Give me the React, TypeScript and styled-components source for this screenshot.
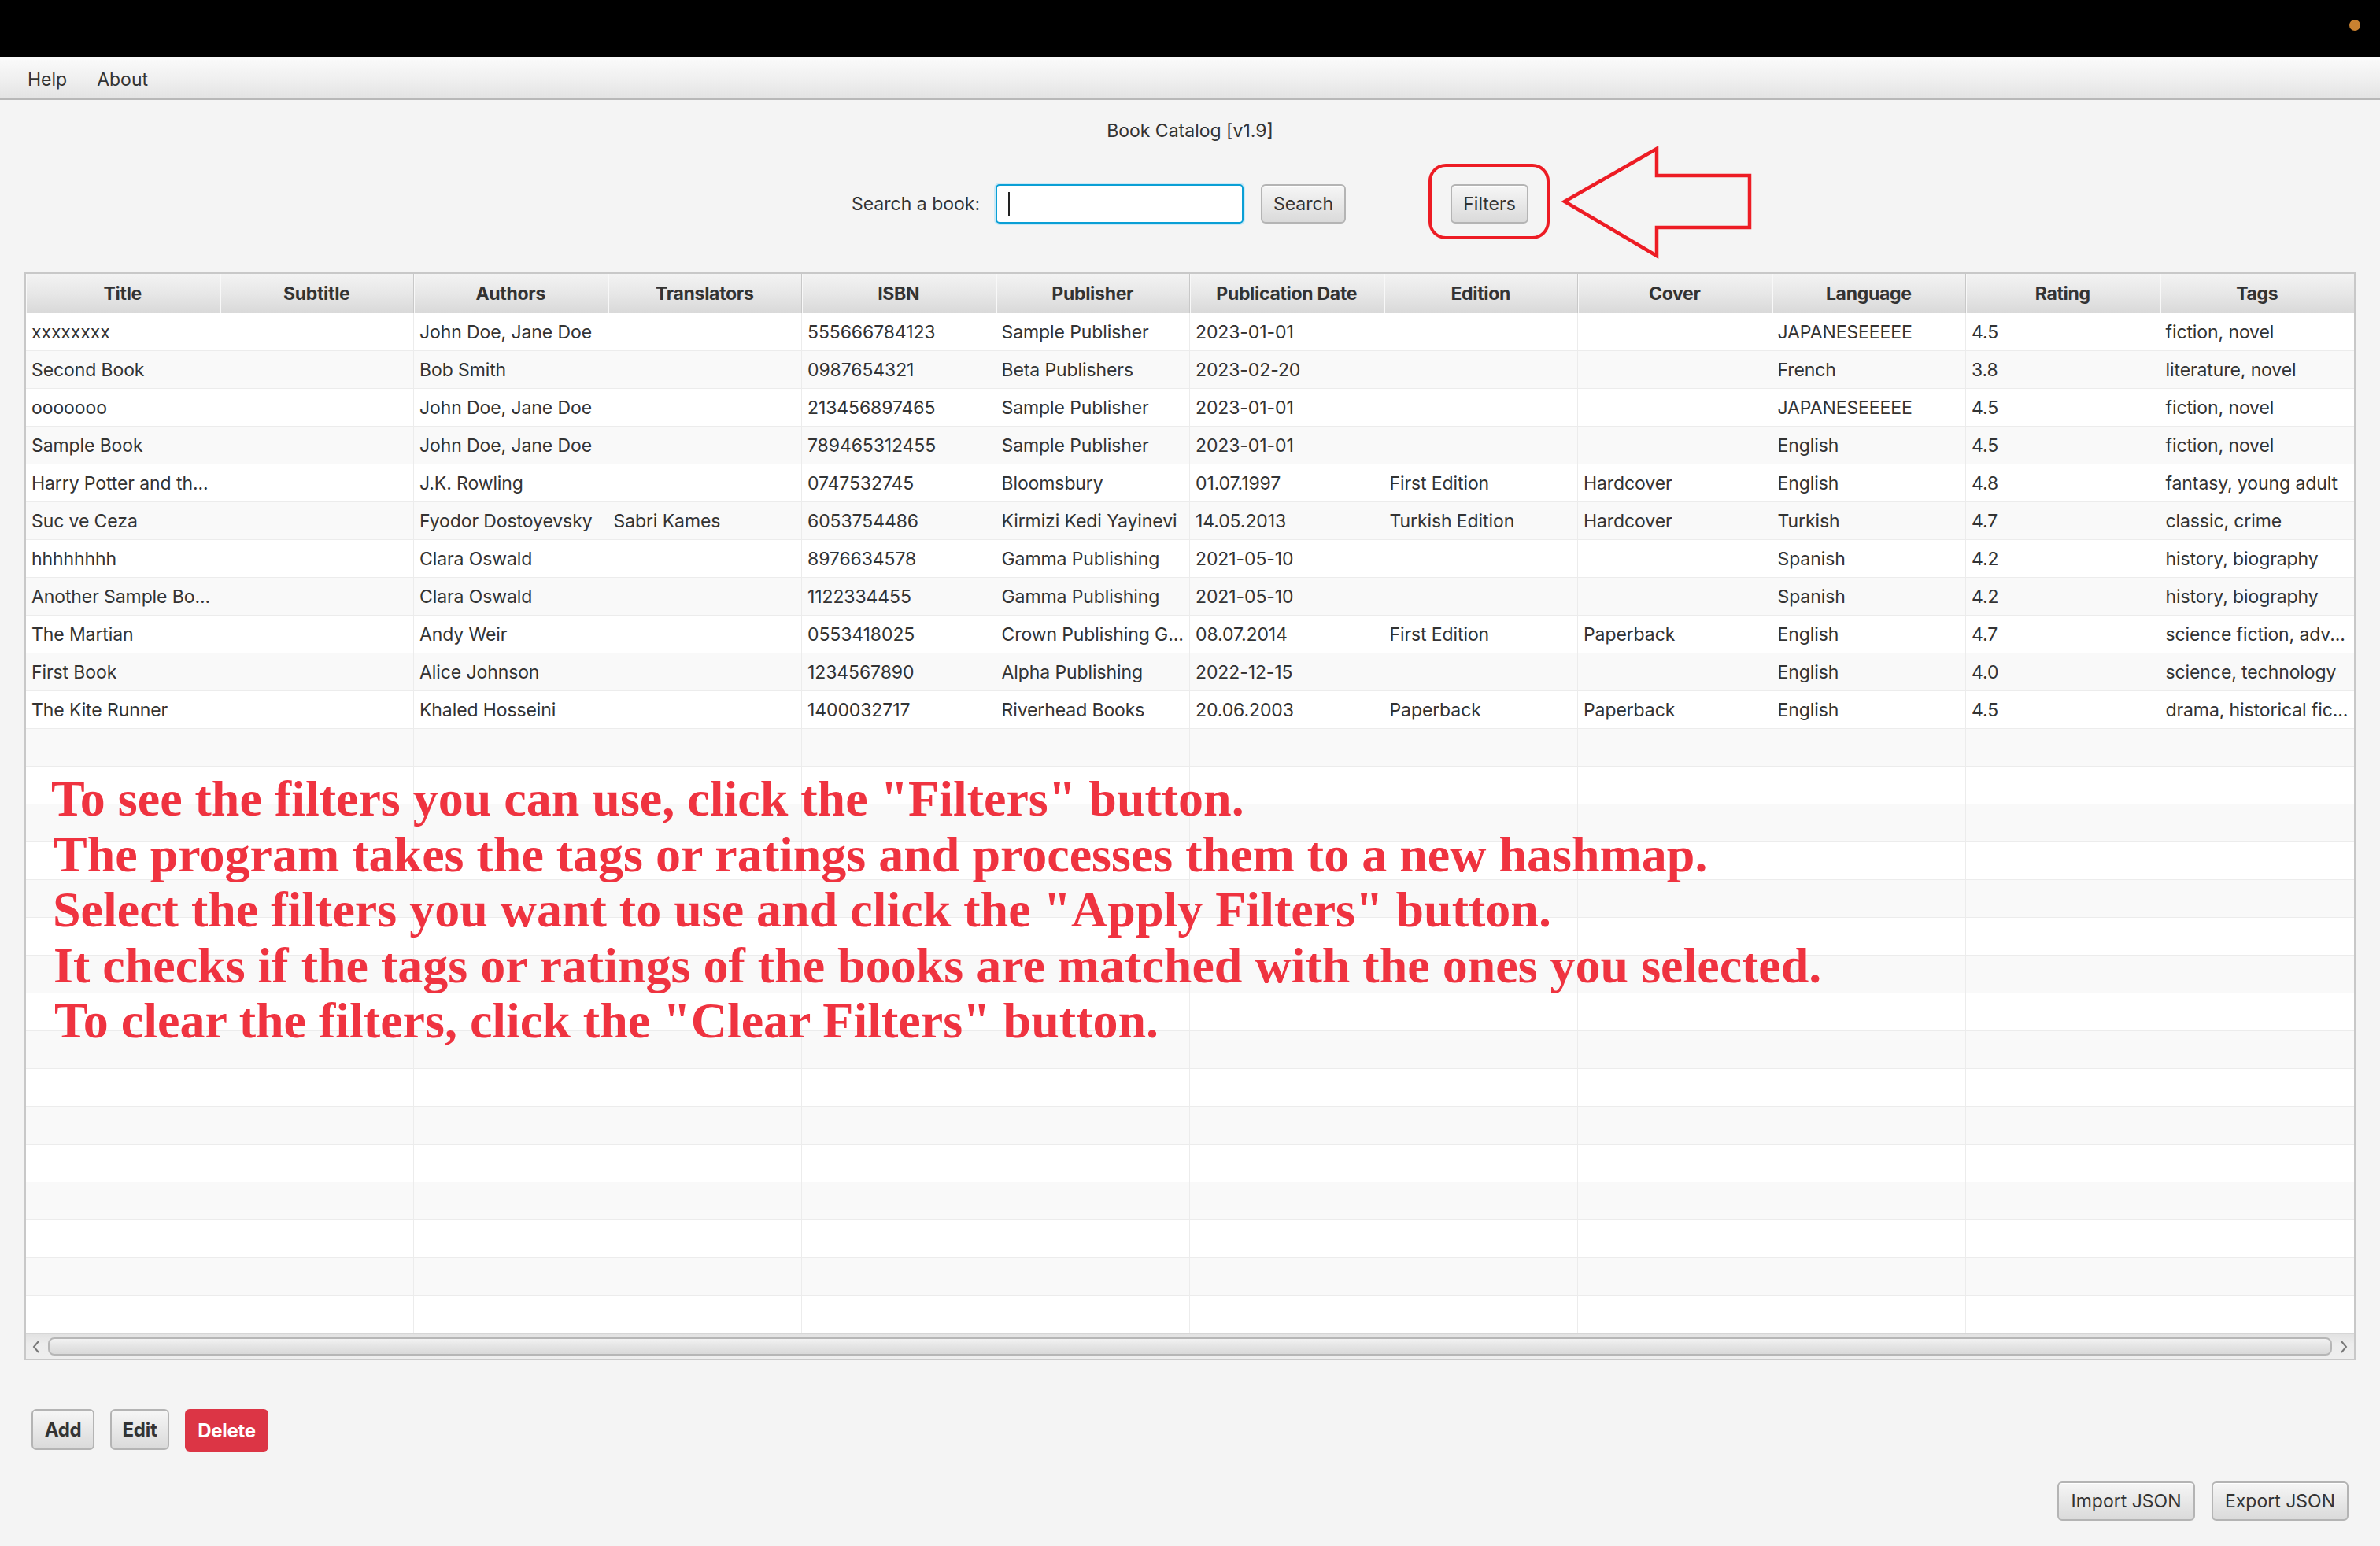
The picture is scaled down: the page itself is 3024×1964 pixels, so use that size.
import React from "react";
import styled, { createGlobalStyle, css } from "styled-components";

const GlobalStyle = createGlobalStyle`
  html, body {
    margin: 0;
    padding: 0;
    background: #f4f4f4;
  }
  body {
    font-family: Inter, "Noto Sans", "Liberation Sans", sans-serif;
    color: #333333;
  }
  * { box-sizing: border-box; }
`;

const Screen = styled.div`
  width: 3024px;
  height: 1964px;
  display: flex;
  flex-direction: column;
  background: #f4f4f4;
  overflow: hidden;
`;

const TopBar = styled.div`
  height: 73px;
  flex: none;
  background: #000000;
  display: flex;
  justify-content: flex-end;
  align-items: flex-start;
  padding: 25px 25px 0 0;
`;

const StatusDot = styled.span`
  width: 14px;
  height: 14px;
  border-radius: 50%;
  background: #c98130;
`;

const MenuBar = styled.div`
  height: 54px;
  flex: none;
  display: flex;
  align-items: center;
  gap: 38px;
  padding: 3px 0 0 35px;
  background: linear-gradient(to bottom, #fbfbfb 0%, #eeeeee 60%, #e3e3e3 100%);
  border-bottom: 2px solid #b8b8b8;
`;

const MenuItem = styled.span`
  font-size: 23px;
  color: #333333;
`;

const Main = styled.div`
  flex: 1;
  display: flex;
  flex-direction: column;
  padding: 0 31px;
`;

const AppTitle = styled.div`
  margin-top: 24px;
  height: 30px;
  line-height: 30px;
  text-align: center;
  font-size: 23px;
  color: #333333;
`;

const SearchRow = styled.div`
  margin-top: 53px;
  height: 50px;
  display: flex;
  justify-content: center;
  align-items: center;
`;

const SearchLabel = styled.span`
  font-size: 23px;
  color: #333333;
  margin-right: 20px;
`;

const SearchField = styled.div`
  width: 315px;
  height: 50px;
  background: #ffffff;
  border: 2px solid #0a9fd5;
  border-radius: 5px;
  box-shadow: 0 0 0 2px #cbe9f6;
  display: flex;
  align-items: center;
  padding-left: 14px;
`;

const Caret = styled.span`
  width: 2px;
  height: 30px;
  background: #222222;
`;

const Button = styled.button<{ $variant?: "default" | "danger"; $w: number; $h?: number; $bold?: boolean }>`
  width: ${(p) => p.$w}px;
  height: ${(p) => p.$h ?? 50}px;
  padding: 0;
  font-family: Inter, "Noto Sans", "Liberation Sans", sans-serif;
  font-size: ${(p) => (p.$bold ? 24 : 23)}px;
  font-weight: ${(p) => (p.$bold ? 700 : 400)};
  letter-spacing: ${(p) => (p.$bold ? "-0.3px" : "0")};
  border-radius: 6px;
  cursor: pointer;
  display: inline-flex;
  align-items: center;
  justify-content: center;
  ${(p) =>
    p.$variant === "danger"
      ? css`
          background: #dc3545;
          color: #ffffff;
          border: none;
        `
      : css`
          background: linear-gradient(to bottom, #f6f6f6 0%, #e8e8e8 50%, #dadada 100%);
          color: #333333;
          border: 2px solid #b4b4b4;
          box-shadow: inset 0 1px 0 #ffffff;
        `}
`;

const SearchButton = styled(Button)`
  margin-left: 22px;
`;

const FilterSpot = styled.div`
  position: relative;
  margin-left: 133px;
  display: flex;
`;

const HighlightRing = styled.span`
  position: absolute;
  left: -28px;
  right: -27px;
  top: -26px;
  bottom: -20px;
  border: 4px solid #ed1c24;
  border-radius: 22px;
  pointer-events: none;
`;

const ArrowMark = styled.svg`
  position: absolute;
  left: 142px;
  top: -48px;
  width: 242px;
  height: 142px;
  overflow: visible;
  pointer-events: none;
`;

const TableFrame = styled.div`
  margin-top: 62px;
  position: relative;
  display: flex;
  flex-direction: column;
  border: 2px solid #c8c8c8;
  background: #ffffff;
`;

const HeaderRow = styled.div`
  display: grid;
  grid-template-columns: repeat(12, 1fr);
  border-bottom: 1px solid #c4c4c4;
`;

const HeaderCell = styled.div`
  height: 49px;
  display: flex;
  align-items: center;
  justify-content: center;
  font-size: 23px;
  font-weight: 700;
  color: #333333;
  letter-spacing: -0.3px;
  background: linear-gradient(to bottom, #f3f3f3 0%, #e6e6e6 55%, #d9d9d9 100%);
  border-right: 1px solid #c8c8c8;
  box-shadow: inset 1px 0 0 #f8f8f8;
  &:last-child { border-right: none; }
`;

const BodyRow = styled.div<{ $alt: boolean }>`
  display: grid;
  grid-template-columns: repeat(12, 1fr);
  height: 48px;
  background: ${(p) => (p.$alt ? "#f9f9f9" : "#ffffff")};
  border-bottom: 1px solid #ececec;
`;

const Cell = styled.div`
  display: flex;
  align-items: center;
  padding: 0 7px;
  font-size: 23px;
  color: #333333;
  letter-spacing: -0.1px;
  white-space: nowrap;
  overflow: hidden;
  border-right: 1px solid #ececec;
  &:last-child { border-right: none; }
`;

const HScrollBar = styled.div`
  height: 32px;
  display: flex;
  align-items: center;
  gap: 8px;
  padding: 0 6px;
  background: linear-gradient(to bottom, #e2e2e2 0%, #ececec 40%, #eeeeee 100%);
  border-top: 1px solid #d6d6d6;
`;

const ScrollArrow = styled.svg`
  width: 14px;
  height: 22px;
  flex: none;
`;

const ScrollThumb = styled.div`
  flex: 1;
  height: 23px;
  border-radius: 8px;
  border: 2px solid #b6b6b6;
  background: linear-gradient(to bottom, #f2f2f2 0%, #e4e4e4 50%, #d9d9d9 100%);
`;

const Annotation = styled.div`
  position: absolute;
  left: 32px;
  top: 632px;
  display: flex;
  flex-direction: column;
  pointer-events: none;
`;

const AnnotationLine = styled.div<{ $indent: number }>`
  margin-left: ${(p) => p.$indent}px;
  height: 70.5px;
  line-height: 70.5px;
  font-family: "Liberation Serif", "Times New Roman", serif;
  font-weight: 700;
  font-size: 64px;
  color: #ef3340;
  white-space: nowrap;
`;

const ActionRow = styled.div`
  margin-top: 62px;
  display: flex;
  gap: 20px;
  padding-left: 9px;
`;

const FileRow = styled.div`
  margin-top: 38px;
  display: flex;
  justify-content: flex-end;
  gap: 21px;
  padding-right: 9px;
`;

const COLUMNS = [
  "Title",
  "Subtitle",
  "Authors",
  "Translators",
  "ISBN",
  "Publisher",
  "Publication Date",
  "Edition",
  "Cover",
  "Language",
  "Rating",
  "Tags",
];

const BOOKS: string[][] = [
  ["xxxxxxxx", "", "John Doe, Jane Doe", "", "555666784123", "Sample Publisher", "2023-01-01", "", "", "JAPANESEEEEE", "4.5", "fiction, novel"],
  ["Second Book", "", "Bob Smith", "", "0987654321", "Beta Publishers", "2023-02-20", "", "", "French", "3.8", "literature, novel"],
  ["ooooooo", "", "John Doe, Jane Doe", "", "213456897465", "Sample Publisher", "2023-01-01", "", "", "JAPANESEEEEE", "4.5", "fiction, novel"],
  ["Sample Book", "", "John Doe, Jane Doe", "", "789465312455", "Sample Publisher", "2023-01-01", "", "", "English", "4.5", "fiction, novel"],
  ["Harry Potter and th...", "", "J.K. Rowling", "", "0747532745", "Bloomsbury", "01.07.1997", "First Edition", "Hardcover", "English", "4.8", "fantasy, young adult"],
  ["Suc ve Ceza", "", "Fyodor Dostoyevsky", "Sabri Kames", "6053754486", "Kirmizi Kedi Yayinevi", "14.05.2013", "Turkish Edition", "Hardcover", "Turkish", "4.7", "classic, crime"],
  ["hhhhhhhh", "", "Clara Oswald", "", "8976634578", "Gamma Publishing", "2021-05-10", "", "", "Spanish", "4.2", "history, biography"],
  ["Another Sample Bo...", "", "Clara Oswald", "", "1122334455", "Gamma Publishing", "2021-05-10", "", "", "Spanish", "4.2", "history, biography"],
  ["The Martian", "", "Andy Weir", "", "0553418025", "Crown Publishing G...", "08.07.2014", "First Edition", "Paperback", "English", "4.7", "science fiction, adv..."],
  ["First Book", "", "Alice Johnson", "", "1234567890", "Alpha Publishing", "2022-12-15", "", "", "English", "4.0", "science, technology"],
  ["The Kite Runner", "", "Khaled Hosseini", "", "1400032717", "Riverhead Books", "20.06.2003", "Paperback", "Paperback", "English", "4.5", "drama, historical fic..."],
];

const VISIBLE_ROWS = 27;

const NOTES: { text: string; indent: number }[] = [
  { text: 'To see the filters you can use, click the "Filters" button.', indent: 0 },
  { text: "The program takes the tags or ratings and processes them to a new hashmap.", indent: 3 },
  { text: 'Select the filters you want to use and click the "Apply Filters" button.', indent: 2 },
  { text: "It checks if the tags or ratings of the books are matched with the ones you selected.", indent: 3 },
  { text: 'To clear the filters, click the "Clear Filters" button.', indent: 4 },
];

export default function App() {
  const rows = Array.from({ length: VISIBLE_ROWS }, (_, i) => BOOKS[i] ?? Array(12).fill(""));
  return (
    <Screen>
      <GlobalStyle />
      <TopBar>
        <StatusDot />
      </TopBar>
      <MenuBar>
        <MenuItem>Help</MenuItem>
        <MenuItem>About</MenuItem>
      </MenuBar>
      <Main>
        <AppTitle>Book Catalog [v1.9]</AppTitle>
        <SearchRow>
          <SearchLabel>Search a book:</SearchLabel>
          <SearchField>
            <Caret />
          </SearchField>
          <SearchButton $w={108}>Search</SearchButton>
          <FilterSpot>
            <Button $w={99}>Filters</Button>
            <HighlightRing />
            <ArrowMark viewBox="0 0 242 142">
              <polygon
                points="3,70 120,3 120,37 238,37 238,103 120,103 120,139"
                fill="none"
                stroke="#ed1c24"
                strokeWidth="4.5"
                strokeLinejoin="miter"
              />
            </ArrowMark>
          </FilterSpot>
        </SearchRow>
        <TableFrame>
          <HeaderRow>
            {COLUMNS.map((c) => (
              <HeaderCell key={c}>{c}</HeaderCell>
            ))}
          </HeaderRow>
          {rows.map((r, i) => (
            <BodyRow key={i} $alt={i % 2 === 1}>
              {r.map((v, j) => (
                <Cell key={j}>{v}</Cell>
              ))}
            </BodyRow>
          ))}
          <HScrollBar>
            <ScrollArrow viewBox="0 0 14 22">
              <polyline points="10,4 4,11 10,18" fill="none" stroke="#777" strokeWidth="2" />
            </ScrollArrow>
            <ScrollThumb />
            <ScrollArrow viewBox="0 0 14 22">
              <polyline points="4,4 10,11 4,18" fill="none" stroke="#777" strokeWidth="2" />
            </ScrollArrow>
          </HScrollBar>
          <Annotation>
            {NOTES.map((n) => (
              <AnnotationLine key={n.text} $indent={n.indent}>
                {n.text}
              </AnnotationLine>
            ))}
          </Annotation>
        </TableFrame>
        <ActionRow>
          <Button $w={80} $h={52} $bold>
            Add
          </Button>
          <Button $w={75} $h={52} $bold>
            Edit
          </Button>
          <Button $w={106} $h={54} $bold $variant="danger">
            Delete
          </Button>
        </ActionRow>
        <FileRow>
          <Button $w={175}>Import JSON</Button>
          <Button $w={174}>Export JSON</Button>
        </FileRow>
      </Main>
    </Screen>
  );
}
